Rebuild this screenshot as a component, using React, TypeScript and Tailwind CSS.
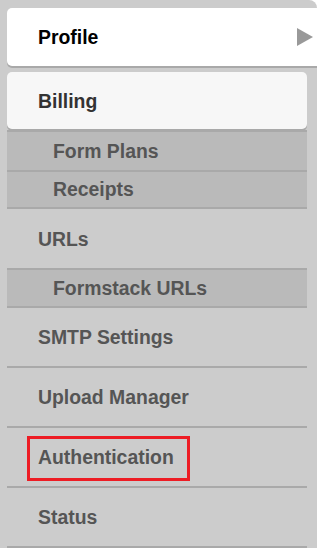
import type { ReactNode } from 'react'

function SubItem({ label, h, last }: { label: string; h: string; last?: boolean }) {
    return (
        <div
            className={`w-[300px] ${h} flex items-center pl-[46px] pt-[1px] bg-[#bababa] border-t-2 border-[#a9a9a9] ${last ? 'border-b-2' : ''}`}
        >
            <span className="text-[#555555]">{label}</span>
        </div>
    )
}

function MainItem({ children }: { children: ReactNode }) {
    return (
        <div className="w-[300px] h-[60px] flex items-center pl-[31px] pt-[2px] border-b-2 border-[#a9a9a9]">
            {children}
        </div>
    )
}

export default function App() {
    return (
        <div
            className="w-[317px] h-[548px] bg-white overflow-hidden text-[19.4px] font-bold leading-none"
            style={{ fontFamily: '"Liberation Sans", Arial, sans-serif' }}
        >
            <div className="h-full bg-[#cccccc] rounded-tr-[8px] pt-[8px] pl-[7px]">
                <div className="relative h-[58px] bg-white rounded-l-[5px] shadow-[0_2px_0_#a9a9a9] flex items-center pl-[31px] pt-[2px]">
                    <span className="text-black">Profile</span>
                    <svg className="absolute right-[4px] top-[20px]" width="16" height="18" viewBox="0 0 16 18">
                        <polygon points="0,0 16,9 0,18" fill="#999999" />
                    </svg>
                </div>
                <div className="mt-[6px] w-[300px] h-[57px] bg-[#f7f7f7] rounded-[5px] shadow-[0_2px_0_#a9a9a9] flex items-center pl-[31px] pt-[2px]">
                    <span className="text-[#333333]">Billing</span>
                </div>
                <div className="mt-[1px]">
                    <SubItem label="Form Plans" h="h-[40px]" />
                    <SubItem label="Receipts" h="h-[39px]" last />
                </div>
                <div className="w-[300px] h-[59px] flex items-center pl-[31px] pt-[2px]">
                    <span className="text-[#555555]">URLs</span>
                </div>
                <SubItem label="Formstack URLs" h="h-[40px]" last />
                <MainItem>
                    <span className="text-[#555555]">SMTP Settings</span>
                </MainItem>
                <MainItem>
                    <span className="text-[#555555]">Upload Manager</span>
                </MainItem>
                <MainItem>
                    <div className="-ml-[11px] h-[45px] flex items-center pl-[8px] pr-[13px] border-[3px] border-[#ed1c24]">
                        <span className="text-[#555555]">Authentication</span>
                    </div>
                </MainItem>
                <MainItem>
                    <span className="text-[#555555]">Status</span>
                </MainItem>
            </div>
        </div>
    )
}
